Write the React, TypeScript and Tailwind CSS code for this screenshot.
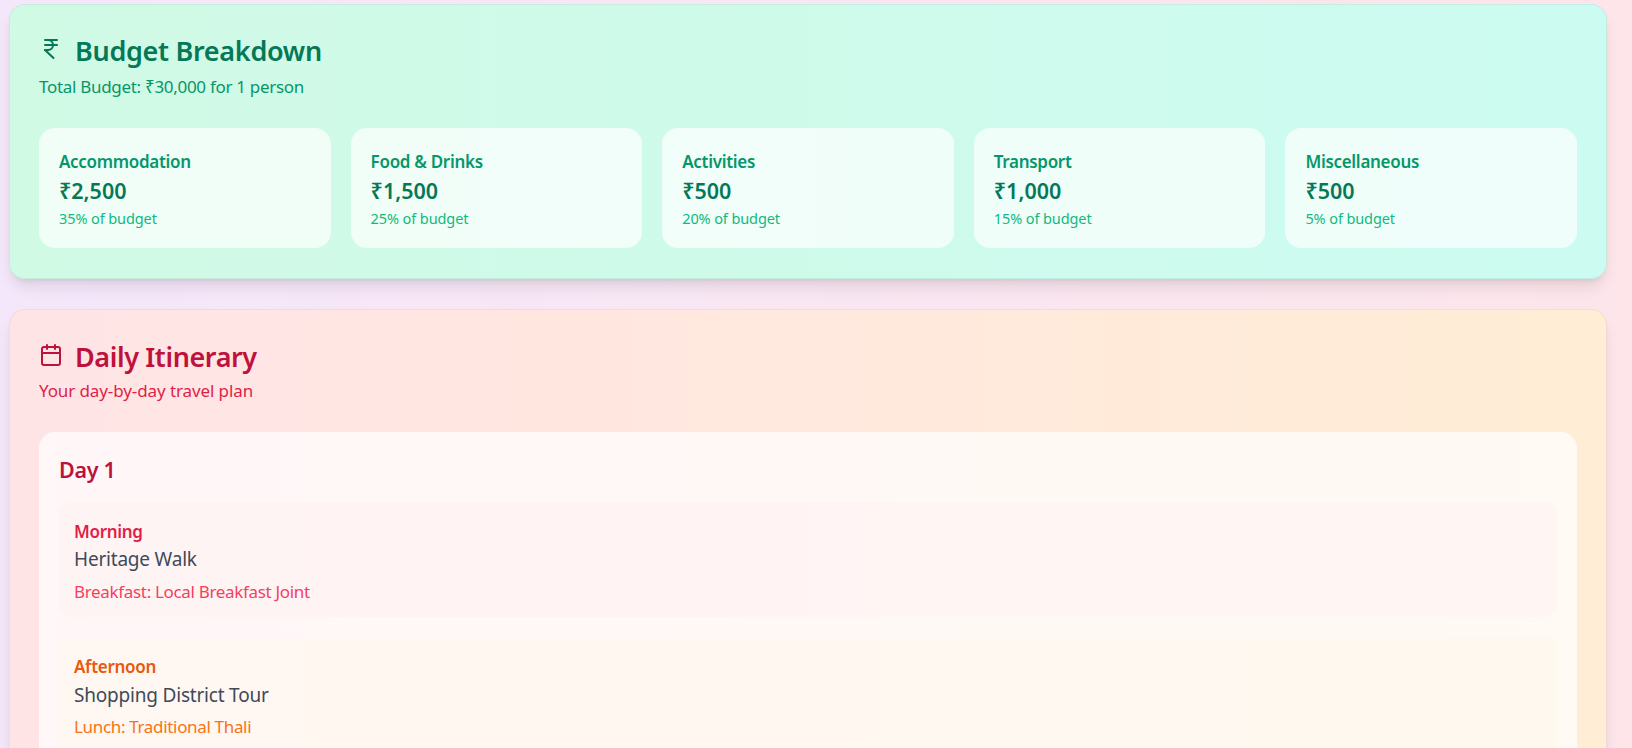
import { Calendar, IndianRupee } from "lucide-react";

const items = [
  { name: "Accommodation", value: "₹2,500", pct: "35% of budget" },
  { name: "Food & Drinks", value: "₹1,500", pct: "25% of budget" },
  { name: "Activities", value: "₹500", pct: "20% of budget" },
  { name: "Transport", value: "₹1,000", pct: "15% of budget" },
  { name: "Miscellaneous", value: "₹500", pct: "5% of budget" },
];

export default function App() {
  return (
    <div className="h-[748px] overflow-hidden bg-gradient-to-r from-[#f4e7fb] to-[#fde5ea] pl-[9px] pr-[25px] pt-[4px] font-['Noto_Sans','Open_Sans',sans-serif]">
      <section className="h-[275px] rounded-2xl border border-black/5 bg-gradient-to-r from-[#d1fae5] to-[#ccfbf1] px-[29px] pt-[30px] shadow-lg">
        <h2 className="flex h-[32px] items-center gap-3 text-[27px] font-semibold tracking-[-0.3px] text-[#047857]">
          <IndianRupee className="mb-1 h-6 w-6" strokeWidth={2} />
          Budget Breakdown
        </h2>
        <p className="mt-[8px] text-[17px] leading-6 tracking-[-0.3px] text-[#059669]">Total Budget: ₹30,000 for 1 person</p>
        <div className="mt-[29px] grid grid-cols-5 gap-5">
          {items.map((it) => (
            <div key={it.name} className="h-[120px] rounded-2xl bg-white/70 px-5 pt-[22px]">
              <div className="text-[17px] leading-6 font-semibold tracking-[-0.3px] text-[#059669]">{it.name}</div>
              <div className="mt-[3px] text-[21.5px] leading-7 font-semibold text-[#047857]">{it.value}</div>
              <div className="mt-[3px] text-[14.5px] leading-5 tracking-[-0.1px] text-[#10b981]">{it.pct}</div>
            </div>
          ))}
        </div>
      </section>
      <section className="mt-[30px] h-[600px] rounded-2xl border border-black/5 bg-gradient-to-r from-[#ffe4e6] to-[#ffedd5] px-[29px] pt-[31px] shadow-lg">
        <h2 className="flex h-[32px] items-center gap-3 text-[27px] font-semibold tracking-[-0.4px] text-[#be123c]">
          <Calendar className="mb-1 h-6 w-6" strokeWidth={2} />
          Daily Itinerary
        </h2>
        <p className="mt-[6px] text-[17px] leading-6 tracking-[-0.1px] text-[#e11d48]">Your day-by-day travel plan</p>
        <div className="mt-[29px] rounded-2xl bg-white/70 px-5 pt-6 pb-6">
          <h3 className="text-[21.5px] leading-7 font-semibold tracking-[-0.3px] text-[#be123c]">Day 1</h3>
          <div className="mt-[18px] h-[115px] rounded-xl bg-[#fff1f2]/60 px-[15px] pt-[18px]">
            <div className="text-[17px] leading-6 font-semibold tracking-[-0.3px] text-[#e11d48]">Morning</div>
            <div className="mt-[1px] text-[19px] leading-7 tracking-[-0.2px] text-[#404a59]">Heritage Walk</div>
            <div className="mt-[7px] text-[17px] leading-6 tracking-[-0.33px] text-[#f43f5e]">Breakfast: Local Breakfast Joint</div>
          </div>
          <div className="mt-[21px] h-[115px] rounded-xl bg-[#fff7ed]/60 px-[15px] pt-[17px]">
            <div className="text-[17px] leading-6 font-semibold tracking-[-0.3px] text-[#ea580c]">Afternoon</div>
            <div className="mt-[2px] text-[19px] leading-7 tracking-[-0.2px] text-[#404a59]">Shopping District Tour</div>
            <div className="mt-[6px] text-[17px] leading-6 tracking-[-0.33px] text-[#f97316]">Lunch: Traditional Thali</div>
          </div>
        </div>
      </section>
    </div>
  );
}
